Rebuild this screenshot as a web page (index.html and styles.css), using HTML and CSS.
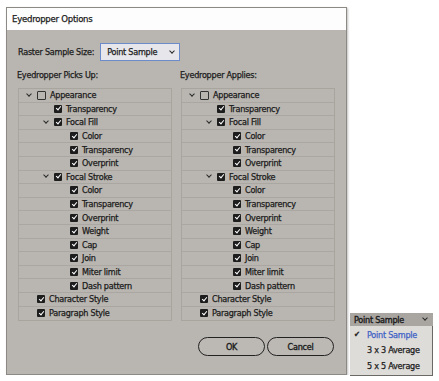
FILE: index.html
```html
<!DOCTYPE html>
<html lang="en">
<head>
  <meta charset="UTF-8" />
  <title>Eyedropper Options</title>
  <link rel="stylesheet" href="styles.css">
</head>
<body>
  <div class="dialog">
    <div class="titlebar">Eyedropper Options</div>

    <div class="dialog-body">
      <div class="sample-row">
        <span>Raster Sample Size:</span>
        <div class="select">Point Sample<span class="chev"></span></div>
      </div>

      <div class="columns">
        <div class="column">
          <div class="col-label">Eyedropper Picks Up:</div>
          <div class="tree">
            <div class="row lv0"><span class="twist"><span class="chev"></span></span><span class="cb off"></span>Appearance</div>
            <div class="row lv1"><span class="twist"></span><span class="cb"></span>Transparency</div>
            <div class="row lv1"><span class="twist"><span class="chev"></span></span><span class="cb"></span>Focal Fill</div>
            <div class="row lv2"><span class="twist"></span><span class="cb"></span>Color</div>
            <div class="row lv2"><span class="twist"></span><span class="cb"></span>Transparency</div>
            <div class="row lv2"><span class="twist"></span><span class="cb"></span>Overprint</div>
            <div class="row lv1"><span class="twist"><span class="chev"></span></span><span class="cb"></span>Focal Stroke</div>
            <div class="row lv2"><span class="twist"></span><span class="cb"></span>Color</div>
            <div class="row lv2"><span class="twist"></span><span class="cb"></span>Transparency</div>
            <div class="row lv2"><span class="twist"></span><span class="cb"></span>Overprint</div>
            <div class="row lv2"><span class="twist"></span><span class="cb"></span>Weight</div>
            <div class="row lv2"><span class="twist"></span><span class="cb"></span>Cap</div>
            <div class="row lv2"><span class="twist"></span><span class="cb"></span>Join</div>
            <div class="row lv2"><span class="twist"></span><span class="cb"></span>Miter limit</div>
            <div class="row lv2"><span class="twist"></span><span class="cb"></span>Dash pattern</div>
            <div class="row lv0"><span class="twist"></span><span class="cb"></span>Character Style</div>
            <div class="row lv0"><span class="twist"></span><span class="cb"></span>Paragraph Style</div>
          </div>
        </div>

        <div class="column">
          <div class="col-label">Eyedropper Applies:</div>
          <div class="tree">
            <div class="row lv0"><span class="twist"><span class="chev"></span></span><span class="cb off"></span>Appearance</div>
            <div class="row lv1"><span class="twist"></span><span class="cb"></span>Transparency</div>
            <div class="row lv1"><span class="twist"><span class="chev"></span></span><span class="cb"></span>Focal Fill</div>
            <div class="row lv2"><span class="twist"></span><span class="cb"></span>Color</div>
            <div class="row lv2"><span class="twist"></span><span class="cb"></span>Transparency</div>
            <div class="row lv2"><span class="twist"></span><span class="cb"></span>Overprint</div>
            <div class="row lv1"><span class="twist"><span class="chev"></span></span><span class="cb"></span>Focal Stroke</div>
            <div class="row lv2"><span class="twist"></span><span class="cb"></span>Color</div>
            <div class="row lv2"><span class="twist"></span><span class="cb"></span>Transparency</div>
            <div class="row lv2"><span class="twist"></span><span class="cb"></span>Overprint</div>
            <div class="row lv2"><span class="twist"></span><span class="cb"></span>Weight</div>
            <div class="row lv2"><span class="twist"></span><span class="cb"></span>Cap</div>
            <div class="row lv2"><span class="twist"></span><span class="cb"></span>Join</div>
            <div class="row lv2"><span class="twist"></span><span class="cb"></span>Miter limit</div>
            <div class="row lv2"><span class="twist"></span><span class="cb"></span>Dash pattern</div>
            <div class="row lv0"><span class="twist"></span><span class="cb"></span>Character Style</div>
            <div class="row lv0"><span class="twist"></span><span class="cb"></span>Paragraph Style</div>
          </div>
        </div>
      </div>

      <div class="buttons">
        <button class="btn">OK</button>
        <button class="btn">Cancel</button>
      </div>
    </div>
  </div>

  <!-- open dropdown shown beside the dialog -->
  <div class="popup">
    <div class="popup-head">Point Sample<span class="chev"></span></div>
    <div class="popup-list">
      <div class="item selected"><span class="tick">&#10004;</span>Point Sample</div>
      <div class="item"><span class="tick"></span>3 x 3 Average</div>
      <div class="item"><span class="tick"></span>5 x 5 Average</div>
    </div>
  </div>
</body>
</html>
```

FILE: styles.css
```css
body {
  margin: 0;
  background: #fff;
  font-family: "DejaVu Sans Condensed", "Liberation Sans", sans-serif;
  font-size: 9px;
  letter-spacing: -0.25px;
  -webkit-text-stroke: 0.25px;
  color: #1b1b1b;
}

.dialog {
  margin: 7px 0 0 6px;
  width: 341px;
  height: 368px;
  box-sizing: border-box;
  border: 1px solid #8d8a86;
  background: #b9b6b1;
  box-shadow: 1px 1px 2px rgba(0, 0, 0, 0.25);
}

.titlebar {
  height: 22px;
  line-height: 22px;
  padding-left: 5px;
  background: #fdfdfd;
  font-size: 9.5px;
}

.dialog-body { padding: 13px 11px 0 11px; }

.sample-row {
  display: flex;
  align-items: center;
  gap: 6px;
  height: 18px;
}

.select {
  display: flex;
  align-items: center;
  justify-content: space-between;
  width: 80px;
  height: 18px;
  box-sizing: border-box;
  padding: 0 5px 0 6px;
  border: 1px solid #6c8bcb;
  background: #e6e6eb;
}

.chev {
  display: inline-block;
  width: 3px;
  height: 3px;
  border-right: 1.3px solid #2a2a2a;
  border-bottom: 1.3px solid #2a2a2a;
  transform: rotate(45deg);
  margin-top: -3px;
}

.columns {
  display: flex;
  gap: 9px;
  margin-top: 8px;
}

.column { width: 154px; }

.col-label {
  height: 13px;
  line-height: 13px;
  margin-left: -1px;
  margin-bottom: 6px;
}

.tree {
  border: 1px solid #a8a59f;
}

.row {
  display: flex;
  align-items: center;
  height: 13.6px;
  box-sizing: border-box;
  border-bottom: 1px solid #aaa7a2;
}

.row:last-child { border-bottom: none; }

.lv0 { padding-left: 7px; }
.lv1 { padding-left: 24px; }
.lv2 { padding-left: 40px; }

.twist {
  display: flex;
  align-items: center;
  justify-content: center;
  width: 6px;
  margin-right: 5px;
}

.cb {
  position: relative;
  flex: none;
  width: 8px;
  height: 8px;
  margin-right: 4px;
  box-sizing: border-box;
  border-radius: 1px;
  background: #1d1d1d;
}

.cb::after {
  content: "";
  position: absolute;
  left: 2.5px;
  top: 0.5px;
  width: 2px;
  height: 4px;
  border-right: 1.3px solid #fff;
  border-bottom: 1.3px solid #fff;
  transform: rotate(40deg);
}

.cb.off {
  background: transparent;
  border: 1px solid #333;
  width: 9px;
  height: 9px;
}

.cb.off::after { display: none; }

.buttons {
  display: flex;
  justify-content: flex-end;
  gap: 2px;
  margin-top: 16px;
  padding-right: 1px;
}

.btn {
  width: 67px;
  height: 19px;
  border: 1.5px solid #222;
  border-radius: 10px;
  background: #bcb9b4;
  font-family: inherit;
  font-size: 9px;
  letter-spacing: inherit;
  -webkit-text-stroke: 0.35px;
  color: #1b1b1b;
  padding: 0;
}

/* Open dropdown */
.popup {
  position: absolute;
  left: 350px;
  top: 313px;
  width: 83px;
}

.popup-head {
  display: flex;
  align-items: center;
  justify-content: space-between;
  height: 13px;
  padding: 0 6px 0 4px;
  background: #a9a6a2;
  -webkit-text-stroke: 0.35px;
}

.popup-list {
  background: #dedcd9;
  border-right: 1px solid #6b6966;
  border-bottom: 1px solid #6b6966;
  padding: 1px 0 1px 0;
}

.item {
  display: flex;
  align-items: center;
  height: 15.5px;
  padding-left: 4px;
}

.tick {
  width: 13px;
  font-size: 8px;
}

.item.selected { color: #3e62c6; }
.item.selected .tick { color: #1b1b1b; }
```
